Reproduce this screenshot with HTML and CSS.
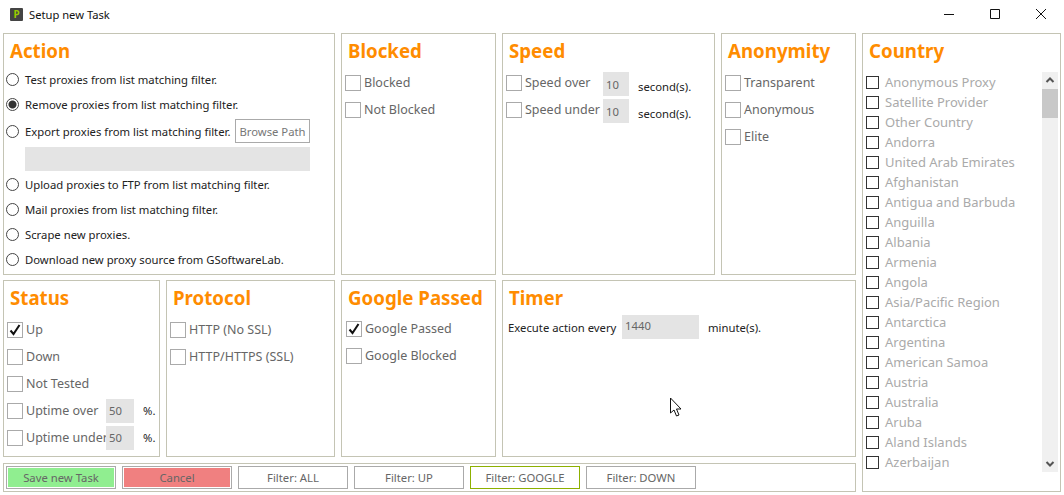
FILE: index.html
```html
<!DOCTYPE html>
<html lang="en">
<head>
  <meta charset="UTF-8" />
  <title>Setup new Task</title>
  <link rel="stylesheet" href="styles.css">
</head>
<body>
  <header class="titlebar">
    <div class="app-icon"><span>P</span></div>
    <div class="app-title">Setup new Task</div>
    <div class="win-btns">
      <svg width="12" height="12" viewBox="0 0 12 12"><path d="M1 6.5h10" stroke="#111" fill="none"/></svg>
      <svg width="12" height="12" viewBox="0 0 12 12"><path d="M1.5 1.5h9v9h-9z" stroke="#111" fill="none"/></svg>
      <svg width="12" height="12" viewBox="0 0 12 12"><path d="M1 1l10 10M11 1L1 11" stroke="#111" fill="none"/></svg>
    </div>
  </header>

  <div class="layout">
    <div class="left">
      <div class="row-top">
        <section class="panel">
          <h2>Action</h2>
          <div class="radios">
            <div class="radio-row"><span class="radio"></span><span>Test proxies from list matching filter.</span></div>
            <div class="radio-row"><span class="radio checked"></span><span>Remove proxies from list matching filter.</span></div>
            <div class="radio-row export"><span class="radio"></span><span>Export proxies from list matching filter.</span><button class="browse">Browse Path</button></div>
            <div class="path-box"></div>
            <div class="radio-row"><span class="radio"></span><span>Upload proxies to FTP from list matching filter.</span></div>
            <div class="radio-row"><span class="radio"></span><span>Mail proxies from list matching filter.</span></div>
            <div class="radio-row"><span class="radio"></span><span>Scrape new proxies.</span></div>
            <div class="radio-row"><span class="radio"></span><span>Download new proxy source from GSoftwareLab.</span></div>
          </div>
        </section>

        <section class="panel">
          <h2>Blocked</h2>
          <div class="checks">
            <div class="check-row"><span class="box"></span><span>Blocked</span></div>
            <div class="check-row"><span class="box"></span><span>Not Blocked</span></div>
          </div>
        </section>

        <section class="panel">
          <h2>Speed</h2>
          <div class="checks">
            <div class="check-row speed-row"><span class="box"></span><span class="speed-label">Speed over</span><span class="field speed-field">10</span><span class="unit">second(s).</span></div>
            <div class="check-row speed-row"><span class="box"></span><span class="speed-label">Speed under</span><span class="field speed-field">10</span><span class="unit">second(s).</span></div>
          </div>
        </section>

        <section class="panel">
          <h2>Anonymity</h2>
          <div class="checks">
            <div class="check-row"><span class="box"></span><span>Transparent</span></div>
            <div class="check-row"><span class="box"></span><span>Anonymous</span></div>
            <div class="check-row"><span class="box"></span><span>Elite</span></div>
          </div>
        </section>
      </div>

      <div class="row-bottom">
        <section class="panel">
          <h2>Status</h2>
          <div class="checks">
            <div class="check-row"><span class="box"><svg width="14" height="14" viewBox="0 0 14 14"><path d="M2.5 7.5l3 3.5 6-9" stroke="#111" stroke-width="2" fill="none"/></svg></span><span>Up</span></div>
            <div class="check-row"><span class="box"></span><span>Down</span></div>
            <div class="check-row"><span class="box"></span><span>Not Tested</span></div>
            <div class="check-row"><span class="box"></span><span class="uptime-label">Uptime over</span><span class="field uptime-field">50</span><span class="unit percent">%.</span></div>
            <div class="check-row"><span class="box"></span><span class="uptime-label">Uptime under</span><span class="field uptime-field">50</span><span class="unit percent">%.</span></div>
          </div>
        </section>

        <section class="panel">
          <h2>Protocol</h2>
          <div class="checks">
            <div class="check-row"><span class="box"></span><span>HTTP (No SSL)</span></div>
            <div class="check-row"><span class="box"></span><span>HTTP/HTTPS (SSL)</span></div>
          </div>
        </section>

        <section class="panel">
          <h2>Google Passed</h2>
          <div class="checks google">
            <div class="check-row"><span class="box"><svg width="14" height="14" viewBox="0 0 14 14"><path d="M2.5 7.5l3 3.5 6-9" stroke="#111" stroke-width="2" fill="none"/></svg></span><span>Google Passed</span></div>
            <div class="check-row"><span class="box"></span><span>Google Blocked</span></div>
          </div>
        </section>

        <section class="panel">
          <h2>Timer</h2>
          <div class="timer-row">
            <span class="timer-label">Execute action every</span>
            <span class="field timer-field">1440</span>
            <span class="unit">minute(s).</span>
          </div>
        </section>
      </div>

      <footer class="actions">
        <button class="btn save">Save new Task</button>
        <button class="btn cancel">Cancel</button>
        <button class="btn filter">Filter: ALL</button>
        <button class="btn filter">Filter: UP</button>
        <button class="btn filter active">Filter: GOOGLE</button>
        <button class="btn filter">Filter: DOWN</button>
      </footer>
    </div>

    <section class="panel country">
      <h2>Country</h2>
      <div class="country-wrap">
        <ul class="country-list">
          <li><span class="mini-box"></span>Anonymous Proxy</li>
          <li><span class="mini-box"></span>Satellite Provider</li>
          <li><span class="mini-box"></span>Other Country</li>
          <li><span class="mini-box"></span>Andorra</li>
          <li><span class="mini-box"></span>United Arab Emirates</li>
          <li><span class="mini-box"></span>Afghanistan</li>
          <li><span class="mini-box"></span>Antigua and Barbuda</li>
          <li><span class="mini-box"></span>Anguilla</li>
          <li><span class="mini-box"></span>Albania</li>
          <li><span class="mini-box"></span>Armenia</li>
          <li><span class="mini-box"></span>Angola</li>
          <li><span class="mini-box"></span>Asia/Pacific Region</li>
          <li><span class="mini-box"></span>Antarctica</li>
          <li><span class="mini-box"></span>Argentina</li>
          <li><span class="mini-box"></span>American Samoa</li>
          <li><span class="mini-box"></span>Austria</li>
          <li><span class="mini-box"></span>Australia</li>
          <li><span class="mini-box"></span>Aruba</li>
          <li><span class="mini-box"></span>Aland Islands</li>
          <li><span class="mini-box"></span>Azerbaijan</li>
        </ul>
        <div class="scrollbar">
          <svg width="16" height="17" viewBox="0 0 16 17"><path d="M4.5 10L8 6.5l3.5 3.5" stroke="#555" stroke-width="2" fill="none"/></svg>
          <div class="thumb"></div>
          <div class="track"></div>
          <svg width="16" height="17" viewBox="0 0 16 17"><path d="M4.5 7L8 10.5 11.5 7" stroke="#555" stroke-width="2" fill="none"/></svg>
        </div>
      </div>
    </section>
  </div>

  <svg class="cursor" width="14" height="20" viewBox="0 0 14 20"><path d="M1.5 1v15l3.5-3 2.5 6 2.5-1-2.5-6H12z" fill="#fff" stroke="#111"/></svg>
</body>
</html>
```

FILE: styles.css
```css
* {
  box-sizing: border-box;
}

html, body {
  margin: 0;
  height: 100%;
  overflow: hidden;
}

body {
  position: relative;
  background: #fff;
  font-family: 'Noto Sans', 'Open Sans', sans-serif;
  font-size: 11.3px;
  color: #222;
}

.titlebar {
  display: flex;
  align-items: center;
  height: 33px;
  padding: 0 5px 5px 10px;
}

.app-icon {
  display: flex;
  align-items: center;
  justify-content: center;
  width: 13px;
  height: 13px;
  background: #444;
  border-radius: 1px;
}

.app-icon span {
  color: #9acd00;
  font-size: 10px;
  font-weight: 700;
  line-height: 1;
}

.app-title {
  margin-left: 6px;
  font-size: 11.2px;
  color: #111;
}

.win-btns {
  display: flex;
  gap: 34px;
  margin-left: auto;
  padding-right: 12px;
}

.layout {
  display: flex;
  gap: 6px;
  padding-left: 3px;
}

.left {
  display: flex;
  flex-direction: column;
  width: 853px;
}

.row-top {
  display: grid;
  grid-template-columns: 332px 155px 213px 135px;
  gap: 6px;
  height: 242px;
}

.row-bottom {
  display: grid;
  grid-template-columns: 157px 169px 155px 354px;
  gap: 6px;
  height: 177px;
  margin-top: 5px;
}

.panel {
  border: 1px solid #c4c4b4;
  background: #fff;
}

.panel h2 {
  height: 35px;
  margin: 0;
  padding-left: 6px;
  color: #ff8c00;
  font-size: 18.7px;
  font-weight: 700;
  line-height: 34px;
}

.radios {
  margin-top: -2px;
  padding-left: 2px;
}

.radio-row {
  display: flex;
  align-items: center;
  height: 25px;
}

.radio-row.export {
  height: 26px;
  margin-top: 1px;
}

.radio {
  flex: none;
  width: 13px;
  height: 13px;
  margin-right: 6px;
  border: 1px solid #444;
  border-radius: 50%;
  background: #fff;
}

.radio.checked {
  background: radial-gradient(circle, #333 0 3.5px, #fff 4.5px);
}

.browse {
  width: 75px;
  height: 24px;
  margin-left: auto;
  margin-right: 24px;
  padding: 0;
  border: 1px solid #aaa;
  background: #fff;
  color: #777;
  font: inherit;
}

.path-box {
  width: 285px;
  height: 24px;
  margin: 3px 0 1px 19px;
  background: #e4e4e4;
}

.checks {
  padding-left: 3px;
}

.checks.google {
  margin-top: -1px;
  padding-left: 4px;
}

.check-row {
  display: flex;
  align-items: center;
  height: 27px;
  color: #666;
  font-size: 12.5px;
}

.box {
  display: flex;
  align-items: center;
  justify-content: center;
  flex: none;
  width: 16px;
  height: 16px;
  margin-right: 3px;
  border: 1px solid #aaa;
}

.field {
  display: flex;
  align-items: center;
  flex: none;
  height: 24px;
  background: #e4e4e4;
  color: #666;
  font-size: 11.3px;
}

.unit {
  color: #222;
  font-size: 11.3px;
}

.speed-row .speed-field {
  align-self: flex-end;
  width: 26px;
  padding-left: 3px;
}

.speed-row .unit {
  align-self: flex-end;
  margin-bottom: 2px;
  margin-left: 9px;
}

.speed-label {
  width: 78px;
  white-space: nowrap;
}

.uptime-label {
  width: 80px;
  white-space: nowrap;
}

.uptime-field {
  width: 28px;
  padding-left: 3px;
}

.percent {
  margin-left: 9px;
}

.timer-row {
  display: flex;
  align-items: center;
  height: 24px;
  margin-top: -1px;
  padding-left: 5px;
}

.timer-label {
  width: 114px;
  white-space: nowrap;
}

.timer-field {
  width: 77px;
  margin-right: 9px;
  padding: 0 0 4px 3px;
}

.actions {
  display: flex;
  align-items: center;
  gap: 6px;
  height: 29px;
  margin-top: 6px;
  padding: 0 2px;
  border: 1px solid #c4c4b4;
}

.btn {
  width: 110px;
  height: 23px;
  padding: 0;
  border: 1px solid #aaa;
  background: #fff;
  color: #666;
  font: inherit;
}

.save {
  background: #90ee90;
  box-shadow: inset 0 0 0 1px #fff;
}

.cancel {
  background: #f08080;
  box-shadow: inset 0 0 0 1px #fff;
}

.filter.active {
  border-color: #8db000;
}

.country {
  width: 199px;
  height: 459px;
}

.country-wrap {
  display: flex;
  height: 400px;
  margin-top: 3px;
  padding-left: 3px;
}

.country-list {
  flex: 1;
  margin: 0;
  padding: 0;
  list-style: none;
  color: #aaa;
  font-size: 13px;
}

.country-list li {
  display: flex;
  align-items: center;
  height: 20px;
}

.mini-box {
  width: 13px;
  height: 13px;
  margin-right: 6px;
  border: 1px solid #333;
}

.scrollbar {
  display: flex;
  flex-direction: column;
  width: 16px;
  margin-right: 2px;
  background: #f0f0f0;
}

.thumb {
  height: 29px;
  background: #c8c8c8;
}

.track {
  flex: 1;
}

.cursor {
  position: absolute;
  left: 669px;
  top: 397px;
}
```
